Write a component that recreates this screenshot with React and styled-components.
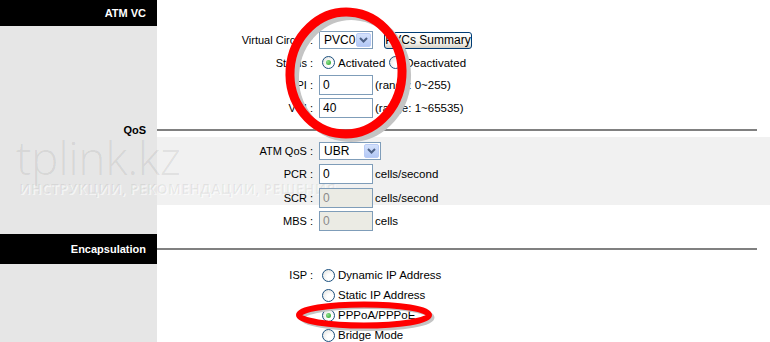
import React from 'react';
import styled, { createGlobalStyle } from 'styled-components';

const GlobalStyle = createGlobalStyle`
  html, body {
    margin: 0;
    padding: 0;
    background: #fff;
  }
  body {
    width: 770px;
    height: 342px;
    overflow: hidden;
    font-family: "Liberation Sans", Arial, sans-serif;
    font-size: 11px;
    color: #000;
  }
`;

function Chevron() {
  return (
    <svg width="9" height="6" viewBox="0 0 9 6">
      <path d="M1 1 L4.5 4.5 L8 1" fill="none" stroke="#4d6185" strokeWidth="2" />
    </svg>
  );
}

function Select({ value, width }) {
  return (
    <SelectBox $w={width}>
      <SelectValue>{value}</SelectValue>
      <SelectArrow>
        <Chevron />
      </SelectArrow>
    </SelectBox>
  );
}

function Radio({ checked, label }) {
  return (
    <RadioItem>
      <RadioDot $checked={checked} />
      <span>{label}</span>
    </RadioItem>
  );
}

function FormRow({ label, height, children }) {
  return (
    <Row $h={height}>
      <Side />
      <Label>{label}</Label>
      <Field>{children}</Field>
    </Row>
  );
}

function SectionHeader({ title, dark, height, line }) {
  return (
    <Row $h={height}>
      <HeaderCell $dark={dark}>{title}</HeaderCell>
      <HeaderRight>{line && <Rule />}</HeaderRight>
    </Row>
  );
}

export default function App() {
  return (
    <Page>
      <GlobalStyle />
      <SectionHeader title="ATM VC" dark height={26} />
      <Row $h={2}>
        <Side />
      </Row>
      <FormRow label="Virtual Circuit :" height={24}>
        <Select value="PVC0" width={54} />
        <XpButton>PVCs Summary</XpButton>
      </FormRow>
      <FormRow label="Status :" height={21}>
        <Radio checked label="Activated" />
        <Radio label="Deactivated" />
      </FormRow>
      <FormRow label="VPI :" height={23}>
        <TextInput>0</TextInput>
        <Hint>(range: 0~255)</Hint>
      </FormRow>
      <FormRow label="VCI :" height={24}>
        <TextInput>40</TextInput>
        <Hint>(range: 1~65535)</Hint>
      </FormRow>

      <SectionHeader title="QoS" height={20} line />
      <FormRow label="ATM QoS :" height={22}>
        <Select value="UBR" width={62} />
      </FormRow>
      <FormRow label="PCR :" height={24}>
        <TextInput>0</TextInput>
        <Hint>cells/second</Hint>
      </FormRow>
      <FormRow label="SCR :" height={24}>
        <TextInput $disabled>0</TextInput>
        <Hint>cells/second</Hint>
      </FormRow>
      <FormRow label="MBS :" height={22}>
        <TextInput $disabled>0</TextInput>
        <Hint>cells</Hint>
      </FormRow>
      <Row $h={2}>
        <Side />
      </Row>

      <SectionHeader title="Encapsulation" dark height={30} line />
      <Row $h={1}>
        <Side />
      </Row>
      <FormRow label="ISP :" height={20}>
        <Radio label="Dynamic IP Address" />
      </FormRow>
      <FormRow label="" height={20}>
        <Radio label="Static IP Address" />
      </FormRow>
      <FormRow label="" height={20}>
        <Radio checked label="PPPoA/PPPoE" />
      </FormRow>
      <FormRow label="" height={20}>
        <Radio label="Bridge Mode" />
      </FormRow>

      <Watermark>
        <WatermarkLogo>tplink.kz</WatermarkLogo>
        <WatermarkTag>ИНСТРУКЦИИ, РЕКОМЕНДАЦИИ, РЕШЕНИЯ</WatermarkTag>
      </Watermark>

      <Marks width="770" height="342" viewBox="0 0 770 342">
        <g transform="rotate(4 351 77)">
          <ellipse cx="351" cy="77" rx="56" ry="61" fill="none" stroke="#c4c4c4" strokeWidth="8" />
        </g>
        <g transform="rotate(4 346 73)">
          <ellipse cx="346" cy="73" rx="56" ry="61" fill="none" stroke="#ff0000" strokeWidth="9" />
        </g>
        <ellipse cx="367" cy="317.5" rx="65" ry="11" fill="none" stroke="#c4c4c4" strokeWidth="5" />
        <ellipse cx="364" cy="315" rx="65" ry="10.5" fill="none" stroke="#ff0000" strokeWidth="6" />
      </Marks>
    </Page>
  );
}

const Page = styled.div`
  position: relative;
  width: 770px;
  height: 342px;
  overflow: hidden;
`;

const Row = styled.div`
  display: flex;
  align-items: stretch;
  height: ${(p) => p.$h}px;
`;

const Side = styled.div`
  width: 157px;
  flex: none;
  background: #e6e6e6;
`;

const HeaderCell = styled.div`
  width: 157px;
  flex: none;
  box-sizing: border-box;
  padding-right: 11px;
  display: flex;
  align-items: center;
  justify-content: flex-end;
  background: ${(p) => (p.$dark ? '#000' : '#e6e6e6')};
  color: ${(p) => (p.$dark ? '#fff' : '#000')};
  font-weight: bold;
  font-size: 11px;
`;

const HeaderRight = styled.div`
  flex: 1;
  display: flex;
  align-items: center;
  padding-right: 13px;
`;

const Rule = styled.div`
  flex: 1;
  height: 2px;
  background: #808080;
`;

const Label = styled.div`
  position: relative;
  z-index: 1;
  width: 156px;
  flex: none;
  display: flex;
  align-items: center;
  justify-content: flex-end;
  white-space: pre;
`;

const Field = styled.div`
  position: relative;
  z-index: 1;
  display: flex;
  align-items: center;
  margin-left: 6px;
`;

const SelectBox = styled.div`
  width: ${(p) => p.$w}px;
  height: 18px;
  box-sizing: border-box;
  border: 1px solid #7f9db9;
  background: #fff;
  display: flex;
  align-items: center;
  justify-content: space-between;
  padding: 1px;
`;

const SelectValue = styled.span`
  padding-left: 3px;
  font-size: 12px;
`;

const SelectArrow = styled.span`
  width: 15px;
  height: 14px;
  box-sizing: border-box;
  border: 1px solid #b9cbf5;
  border-radius: 2px;
  background: linear-gradient(#d4e1fc, #b3c8f5);
  display: flex;
  align-items: center;
  justify-content: center;
`;

const XpButton = styled.div`
  margin-left: 11px;
  height: 17px;
  width: 88px;
  box-sizing: border-box;
  border: 1px solid #003c74;
  border-radius: 3px;
  background: linear-gradient(#ffffff, #f0f0ea 70%, #d6d0c5);
  display: flex;
  align-items: center;
  justify-content: center;
  font-size: 12px;
`;

const RadioItem = styled.label`
  display: flex;
  align-items: center;
  margin-left: 3px;
  margin-right: 1px;
  font-size: 11.5px;
`;

const RadioDot = styled.span`
  width: 13px;
  height: 13px;
  box-sizing: border-box;
  border-radius: 50%;
  border: 1px solid #1c5180;
  background: radial-gradient(circle at 65% 65%, #fff 30%, #dcdcd7 100%);
  margin-right: 3px;
  display: flex;
  align-items: center;
  justify-content: center;

  &::after {
    content: '';
    display: ${(p) => (p.$checked ? 'block' : 'none')};
    width: 5px;
    height: 5px;
    border-radius: 50%;
    background: radial-gradient(circle at 35% 35%, #8fe08f, #21a121);
  }
`;

const TextInput = styled.div`
  width: 54px;
  height: 20px;
  box-sizing: border-box;
  border: 1px solid #7f9db9;
  background: ${(p) => (p.$disabled ? '#ebebe4' : '#fff')};
  color: ${(p) => (p.$disabled ? '#8a8a8a' : '#000')};
  display: flex;
  align-items: center;
  padding-left: 3px;
  font-size: 12px;
`;

const Hint = styled.span`
  margin-left: 2px;
  font-size: 11.5px;
`;

const Watermark = styled.div`
  position: absolute;
  left: 0;
  top: 137px;
  width: 770px;
  height: 68px;
  background: rgba(230, 230, 230, 0.55);
  box-sizing: border-box;
  padding-left: 16px;
  pointer-events: none;
`;

const WatermarkLogo = styled.div`
  font-family: "Open Sans", sans-serif;
  font-weight: 300;
  font-size: 46px;
  line-height: 44px;
  letter-spacing: -0.3px;
  color: rgba(0, 0, 0, 0.08);
  margin-top: -2px;
`;

const WatermarkTag = styled.div`
  font-family: "Open Sans", sans-serif;
  font-weight: 700;
  font-size: 14px;
  line-height: 16px;
  margin-top: 2px;
  padding-left: 3px;
  letter-spacing: 0.2px;
  color: rgba(0, 0, 0, 0.06);
  text-shadow: 1px 1px 0 rgba(255, 255, 255, 0.6);
`;

const Marks = styled.svg`
  position: absolute;
  left: 0;
  top: 0;
  z-index: 2;
  pointer-events: none;
`;
